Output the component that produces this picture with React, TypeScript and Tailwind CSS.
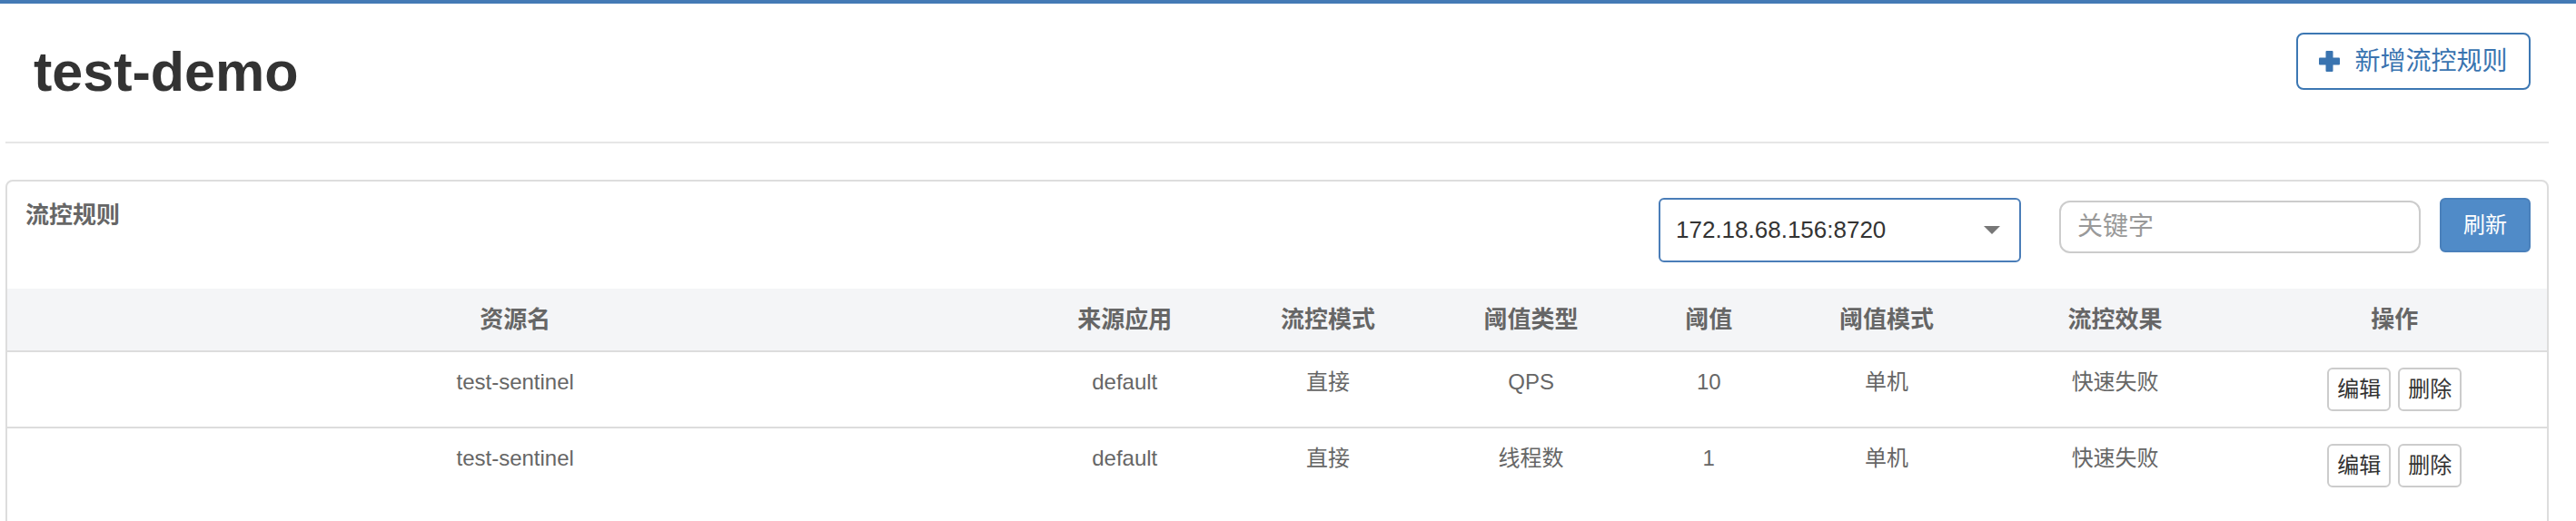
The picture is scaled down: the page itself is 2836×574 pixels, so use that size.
import React from "react";

const rows = [
  { name: "test-sentinel", app: "default", mode: "直接", type: "QPS", count: "10", cluster: "单机", effect: "快速失败" },
  { name: "test-sentinel", app: "default", mode: "直接", type: "线程数", count: "1", cluster: "单机", effect: "快速失败" },
];

const headers = ["资源名", "来源应用", "流控模式", "阈值类型", "阈值", "阈值模式", "流控效果", "操作"];

export default function App() {
  return (
    <div className="h-[574px] w-[2836px] overflow-hidden bg-white font-['Liberation_Sans','Noto_Sans_CJK_SC',sans-serif]">
      <div className="h-[4px] bg-[#447ab5]" />
      <div className="ml-[6px] w-[2800px]">
        <div className="flex h-[152px] items-start justify-between pl-[31px] pr-[20px]">
          <h1 className="mt-[42px] text-[61px] font-bold leading-[66px] text-[#333]">test-demo</h1>
          <button className="mt-[32px] flex h-[63px] w-[258px] items-center justify-center gap-[16px] rounded-[8px] border-2 border-[#3c77b3] bg-white text-[28px] leading-[36px] text-[#3a74b0]">
            <svg width="23" height="23" viewBox="0 0 23 23" className="shrink-0">
              <rect x="7.5" y="0" width="8" height="23" rx="1" fill="#3a74b0" />
              <rect x="0" y="7.5" width="23" height="8" rx="1" fill="#3a74b0" />
            </svg>
            <span>新增流控规则</span>
          </button>
        </div>
        <div className="h-[2px] bg-[#e6e6e6]" />
        <div className="mt-[40px] h-[420px] rounded-[8px] border-2 border-[#ddd]">
          <div className="flex h-[118px] items-start pl-[20px] pr-[18px] pt-[18px]">
            <div className="flex-1 pt-[1px] text-[26px] font-bold leading-[36px] text-[#666]">流控规则</div>
            <div className="flex h-[71px] w-[399px] items-center justify-between rounded-[6px] border-2 border-[#4a7db8] pl-[17px] pr-[21px] text-[26px] text-[#333]">
              <span>172.18.68.156:8720</span>
              <svg width="18" height="9" viewBox="0 0 18 9">
                <polygon points="0,0 18,0 9,9" fill="#777" />
              </svg>
            </div>
            <input
              className="ml-[42px] mt-[3px] h-[58px] w-[398px] rounded-[12px] border-2 border-[#ccc] pl-[18px] text-[28px] text-[#333] outline-none placeholder:text-[#999]"
              placeholder="关键字"
            />
            <button className="ml-[21px] h-[60px] w-[100px] rounded-[6px] border-2 border-[#4a80bb] bg-[#508bc8] text-[24px] text-white">
              刷新
            </button>
          </div>
          <div className="grid h-[70px] grid-cols-[40%_8%_8%_8%_6%_8%_10%_12%] items-center border-b-2 border-[#ddd] bg-[#f4f5f7] text-center text-[26px] font-bold leading-[36px] text-[#666]">
            {headers.map((h) => (
              <div key={h}>{h}</div>
            ))}
          </div>
          <div className="divide-y-2 divide-[#ddd]">
            {rows.map((r, i) => (
              <div key={i} className="grid grid-cols-[40%_8%_8%_8%_6%_8%_10%_12%] items-start text-center text-[24px] leading-[34px] text-[#666]">
                <div className="pt-[16px]">{r.name}</div>
                <div className="pt-[16px]">{r.app}</div>
                <div className="pt-[16px]">{r.mode}</div>
                <div className="pt-[16px]">{r.type}</div>
                <div className="pt-[16px]">{r.count}</div>
                <div className="pt-[16px]">{r.cluster}</div>
                <div className="pt-[16px]">{r.effect}</div>
                <div className="flex justify-center gap-[8px] py-[17px]">
                  <button className="h-[48px] w-[70px] rounded-[6px] border-2 border-[#ccc] bg-white text-[24px] leading-[30px] text-[#333]">编辑</button>
                  <button className="h-[48px] w-[70px] rounded-[6px] border-2 border-[#ccc] bg-white text-[24px] leading-[30px] text-[#333]">删除</button>
                </div>
              </div>
            ))}
          </div>
        </div>
      </div>
    </div>
  );
}
